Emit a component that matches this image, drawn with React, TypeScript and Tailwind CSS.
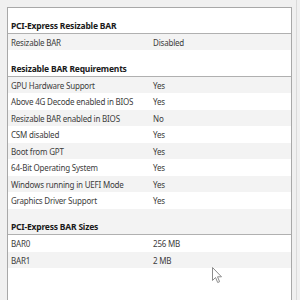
import React from "react";

type Row = { label: string; value: string; gray: boolean; h: number };

const font = { fontFamily: '"Noto Sans", "Liberation Sans", sans-serif' };

function Header({ title, h, gray }: { title: string; h: number; gray?: boolean }) {
  return (
    <div
      className={`flex items-end pl-[3px] pb-[2px] border-b border-[#b0b0b0] text-[8.5px] font-bold tracking-[-0.2px] text-[#1a1a1a] leading-[11px] ${gray ? "bg-[#f3f3f3]" : "bg-white"}`}
      style={{ height: h + 1 }}
    >
      <span className="whitespace-nowrap">{title}</span>
    </div>
  );
}

function DataRow({ r }: { r: Row }) {
  return (
    <div
      className={`flex items-center text-[8px] tracking-[-0.2px] leading-[11px] text-[#3c3c3c] ${r.gray ? "bg-[#f3f3f3]" : "bg-white"}`}
      style={{ height: r.h }}
    >
      <span className="w-[145px] pl-[3px] whitespace-nowrap">{r.label}</span>
      <span className="whitespace-nowrap">{r.value}</span>
    </div>
  );
}

export default function App() {
  const reqs: Row[] = [
    { label: "GPU Hardware Support", value: "Yes", gray: true, h: 16 },
    { label: "Above 4G Decode enabled in BIOS", value: "Yes", gray: false, h: 17 },
    { label: "Resizable BAR enabled in BIOS", value: "No", gray: true, h: 16 },
    { label: "CSM disabled", value: "Yes", gray: false, h: 17 },
    { label: "Boot from GPT", value: "Yes", gray: true, h: 16 },
    { label: "64-Bit Operating System", value: "Yes", gray: false, h: 17 },
    { label: "Windows running in UEFI Mode", value: "Yes", gray: true, h: 16 },
    { label: "Graphics Driver Support", value: "Yes", gray: false, h: 17 },
  ];
  return (
    <div className="relative w-[300px] h-[300px] overflow-hidden bg-[#f0f0f0] flex" style={font}>
      <div className="ml-[7px] mt-[7px] w-[285px] h-[293px] bg-white border-l border-t border-r border-[#a8a8a8] flex flex-col">
        <Header title="PCI-Express Resizable BAR" h={25} />
        <DataRow r={{ label: "Resizable BAR", value: "Disabled", gray: true, h: 16 }} />
        <Header title="Resizable BAR Requirements" h={26} />
        {reqs.map((r) => (
          <DataRow key={r.label} r={r} />
        ))}
        <Header title="PCI-Express BAR Sizes" h={25} gray />
        <DataRow r={{ label: "BAR0", value: "256 MB", gray: false, h: 17 }} />
        <DataRow r={{ label: "BAR1", value: "2 MB", gray: true, h: 16 }} />
      </div>
      <div className="ml-[4px] w-[1px] h-full bg-[#dadada]" />
      <svg
        className="absolute left-[212px] top-[267px]"
        width="12"
        height="18"
        viewBox="0 0 12 18"
      >
        <path
          d="M0.5 0.5 L0.5 13.5 L3.5 10.5 L5.7 15.5 L7.6 14.7 L5.5 9.8 L9.5 9.8 Z"
          fill="#ffffff"
          stroke="#8c8c8c"
          strokeWidth="1"
        />
      </svg>
    </div>
  );
}
